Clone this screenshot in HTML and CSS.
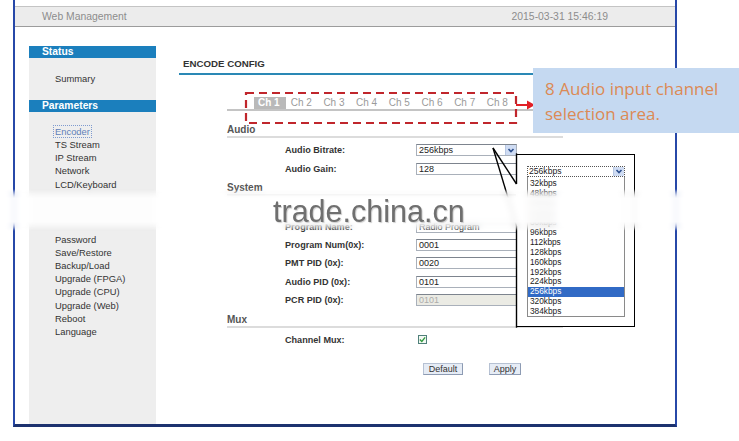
FILE: index.html
```html
<!DOCTYPE html>
<html>
<head>
<meta charset="utf-8">
<title>Web Management - Encode Config</title>
<link rel="stylesheet" href="styles.css">
</head>
<body>
<div class="page">
  <div class="frame">
    <div class="topgap"></div>
    <header class="topbar">
      <span>Web Management</span>
      <span>2015-03-31 15:46:19</span>
    </header>
    <div class="layout">
      <aside class="sidebar">
        <div class="side-head">Status</div>
        <ul class="side-list list-status"><li>Summary</li></ul>
        <div class="side-head">Parameters</div>
        <ul class="side-list list-params">
          <li><span class="focus">Encoder</span></li>
          <li>TS Stream</li>
          <li>IP Stream</li>
          <li>Network</li>
          <li>LCD/Keyboard</li>
        </ul>
        <ul class="side-list list-system">
          <li>Password</li>
          <li>Save/Restore</li>
          <li>Backup/Load</li>
          <li>Upgrade (FPGA)</li>
          <li>Upgrade (CPU)</li>
          <li>Upgrade (Web)</li>
          <li>Reboot</li>
          <li>Language</li>
        </ul>
      </aside>
      <main class="content">
        <h1 class="title">ENCODE CONFIG</h1>
        <div class="tabs">
          <span class="tab active">Ch 1</span>
          <span class="tab">Ch 2</span>
          <span class="tab">Ch 3</span>
          <span class="tab">Ch 4</span>
          <span class="tab">Ch 5</span>
          <span class="tab">Ch 6</span>
          <span class="tab">Ch 7</span>
          <span class="tab">Ch 8</span>
        </div>

        <h2 class="section section-first">Audio</h2>
        <div class="rows">
          <div class="row"><span class="label">Audio Bitrate:</span>
            <div class="field select"><span>256kbps</span><span class="arrow"><svg viewBox="0 0 10 9" width="10" height="9"><path d="M2.5 3 L5 5.6 L7.5 3" fill="none" stroke="#2c4f8e" stroke-width="1.6"/></svg></span></div>
          </div>
          <div class="row"><span class="label">Audio Gain:</span><div class="field">128</div></div>
        </div>

        <h2 class="section">System</h2>
        <div class="rows">
          <div class="row"></div>
          <div class="row"><span class="label">Program Name:</span><div class="field">Radio Program</div></div>
          <div class="row"><span class="label">Program Num(0x):</span><div class="field">0001</div></div>
          <div class="row"><span class="label">PMT PID (0x):</span><div class="field">0020</div></div>
          <div class="row"><span class="label">Audio PID (0x):</span><div class="field">0101</div></div>
          <div class="row"><span class="label">PCR PID (0x):</span><div class="field disabled">0101</div></div>
        </div>

        <h2 class="section">Mux</h2>
        <div class="rows">
          <div class="row"><span class="label">Channel Mux:</span>
            <span class="check"><svg viewBox="0 0 8 8" width="7" height="7"><path d="M1 4 L3.2 6.2 L7 1.5" fill="none" stroke="#2f9a3c" stroke-width="1.5"/></svg></span>
          </div>
        </div>

        <div class="buttons">
          <span class="btn btn-default">Default</span>
          <span class="btn btn-apply">Apply</span>
        </div>
      </main>
    </div>
  </div>

  <!-- annotation: red dashed selection box with arrow -->
  <svg class="red-box" width="294" height="36" viewBox="0 0 294 36">
    <rect x="2" y="2" width="270" height="30" fill="none" stroke="#c0262c" stroke-width="2.2" stroke-dasharray="8 5"/>
    <line x1="272" y1="14" x2="284" y2="14" stroke="#e11f26" stroke-width="2"/>
    <polygon points="283,9.5 291,14 283,18.5" fill="#e11f26"/>
  </svg>

  <div class="callout">8 Audio input channel<br>selection area.</div>

  <!-- annotation: expanded dropdown -->
  <div class="popup">
    <div class="pop-select"><span>256kbps</span><span class="arrow"><svg viewBox="0 0 10 9" width="10" height="9"><path d="M2.5 3 L5 5.6 L7.5 3" fill="none" stroke="#2c4f8e" stroke-width="1.6"/></svg></span></div>
    <ul class="pop-list">
      <li>32kbps</li>
      <li>48kbps</li>
      <li>56kbps</li>
      <li>64kbps</li>
      <li>80kbps</li>
      <li>96kbps</li>
      <li>112kbps</li>
      <li>128kbps</li>
      <li>160kbps</li>
      <li>192kbps</li>
      <li>224kbps</li>
      <li class="sel">256kbps</li>
      <li>320kbps</li>
      <li>384kbps</li>
    </ul>
  </div>
  <svg class="pointer" width="40" height="190" viewBox="0 0 40 190">
    <g stroke="#000" stroke-width="1.4" fill="none">
      <line x1="7" y1="4" x2="30.5" y2="40"/>
      <line x1="7" y1="4" x2="30.5" y2="82"/>
      <line x1="30.5" y1="9.3" x2="30.5" y2="40"/>
      <line x1="30.5" y1="82" x2="30.5" y2="183.7"/>
    </g>
  </svg>

  <div class="watermark"><span class="wm-text">trade.china.cn</span></div>
</div>
</body>
</html>
```

FILE: styles.css
```css
html, body {
  margin: 0;
  padding: 0;
  background: #ffffff;
}

body {
  font-family: "Liberation Sans", Arial, sans-serif;
  color: #333333;
}

.page {
  position: relative;
  width: 739px;
  height: 441px;
  overflow: hidden;
  background: #ffffff;
}

/* outer frame */
.frame {
  margin-left: 13px;
  width: 664px;
  height: 427px;
  box-sizing: border-box;
  border-left: 2px solid #2748a8;
  border-right: 2px solid #2748a8;
  border-bottom: 3px solid #1d326f;
  display: flex;
  flex-direction: column;
}

.topgap {
  height: 6px;
}

.topbar {
  height: 19px;
  border-top: 1px solid #c4c4c4;
  border-bottom: 1px solid #9c9c9c;
  background: #ececec;
  display: flex;
  justify-content: space-between;
  align-items: center;
  padding: 0 67px 0 27px;
  font-size: 10.4px;
  color: #8c8c8c;
}

.layout {
  display: flex;
  flex: 1;
  min-height: 0;
}

/* sidebar */
.sidebar {
  margin-left: 14px;
  margin-top: 19px;
  width: 127px;
  background: #eeeeee;
}

.side-head {
  height: 12px;
  line-height: 12px;
  background: #1b7fbd;
  color: #ffffff;
  font-weight: bold;
  font-size: 10.3px;
  padding-left: 13px;
}

.side-list {
  list-style: none;
  margin: 0;
  padding: 0 0 0 26px;
  font-size: 9.4px;
  line-height: 13.15px;
  color: #333333;
}

.list-status {
  padding-top: 14px;
  padding-bottom: 14.85px;
}

.list-params {
  padding-top: 13px;
}

.list-system {
  padding-top: 42px;
}

.focus {
  display: inline-block;
  line-height: 11px;
  margin-left: -2px;
  padding: 0 1px;
  border: 1px dotted #7f9bcf;
  color: #5f7fb8;
}

/* content */
.content {
  margin-left: 23px;
  flex: 1;
}

.title {
  margin: 31px 0 0;
  width: 350px;
  padding: 0 0 3px 4px;
  font-size: 9.7px;
  line-height: 12px;
  font-weight: bold;
  color: #333333;
  border-bottom: 2px solid #2a88b5;
}

.tabs {
  margin: 22px 0 0 48px;
  width: 306px;
  box-sizing: border-box;
  padding-left: 27px;
  display: flex;
  border-bottom: 2px solid #c4c4c4;
}

.tab {
  width: 32.7px;
  flex: none;
  box-sizing: border-box;
  height: 12px;
  line-height: 12px;
  padding-left: 4px;
  font-size: 10px;
  color: #9a9a9a;
  white-space: nowrap;
}

.tab.active {
  width: 32px;
  margin-right: 0.7px;
  background: #b9b9b9;
  color: #ffffff;
  font-weight: bold;
}

.section {
  margin: 4.3px 0 0 48px;
  width: 336px;
  font-size: 10px;
  line-height: 12px;
  font-weight: bold;
  color: #555555;
  border-bottom: 2px solid #dcdcdc;
}

.section.section-first {
  margin-top: 13px;
}

.rows {
  margin-top: 3px;
  margin-left: 106px;
}

.row {
  height: 18.4px;
  display: flex;
  align-items: center;
}

.label {
  width: 131px;
  flex: none;
  font-size: 9.1px;
  font-weight: bold;
  color: #333333;
}

.field {
  width: 102px;
  height: 12px;
  box-sizing: border-box;
  border: 1px solid #a9b0ba;
  border-top-color: #7d848e;
  background: #ffffff;
  font-size: 9px;
  line-height: 10px;
  padding-left: 2px;
  color: #222222;
  white-space: nowrap;
  overflow: hidden;
}

.field.select {
  width: 101px;
  display: flex;
  justify-content: space-between;
  padding-right: 0;
}

.arrow {
  width: 11px;
  height: 10px;
  box-sizing: border-box;
  background: #cfdcf3;
  border-left: 1px solid #b7c7e3;
  display: flex;
  align-items: center;
  justify-content: center;
}

.field.disabled {
  background: #ebebe4;
  color: #ababab;
}

.check {
  width: 9px;
  height: 9px;
  margin-left: 2px;
  box-sizing: border-box;
  border: 1px solid #50807a;
  background: #f3f8f3;
  display: flex;
  align-items: center;
  justify-content: center;
}

.buttons {
  margin: 13.6px 0 0 244px;
  display: flex;
  gap: 26px;
}

.btn {
  height: 12px;
  box-sizing: border-box;
  border: 1px solid #8d9bb3;
  border-top-color: #b6c1d3;
  border-left-color: #b6c1d3;
  background: #e6ecf5;
  font-size: 9px;
  line-height: 10px;
  text-align: center;
  color: #333333;
}

.btn-default {
  width: 40px;
}

.btn-apply {
  width: 32px;
}

/* annotations */
.red-box {
  position: absolute;
  left: 244px;
  top: 91px;
}

.callout {
  position: absolute;
  left: 533px;
  top: 68px;
  width: 206px;
  height: 65px;
  box-sizing: border-box;
  padding: 7.5px 0 0 12px;
  background: #c5d9f1;
  font-family: "Open Sans", "Liberation Sans", sans-serif;
  font-size: 17px;
  line-height: 25px;
  color: #dc8a55;
  white-space: nowrap;
}

.popup {
  position: absolute;
  left: 516px;
  top: 154px;
  width: 119px;
  height: 173px;
  box-sizing: border-box;
  border: 1.5px solid #000000;
  border-left: none;
  background: #ffffff;
  padding: 11px 0 0 11px;
}

.pop-select {
  width: 98px;
  height: 11px;
  box-sizing: border-box;
  border: 1px dotted #555555;
  display: flex;
  justify-content: space-between;
  font-size: 8.6px;
  line-height: 9px;
  padding-left: 1px;
  color: #222222;
}

.pop-select .arrow {
  height: 9px;
}

.pop-list {
  list-style: none;
  margin: 0;
  width: 98px;
  height: 140px;
  box-sizing: border-box;
  border: 1px solid #8a8a8a;
  border-top: none;
  padding: 2px 0 0;
  font-size: 8.3px;
  line-height: 9.85px;
  color: #222222;
}

.pop-list li {
  padding-left: 2px;
}

.pop-list li.sel {
  background: #316ac5;
  color: #ffffff;
}

.pointer {
  position: absolute;
  left: 486px;
  top: 144px;
}

.watermark {
  position: absolute;
  left: 0;
  top: 189px;
  width: 739px;
  height: 42px;
  box-sizing: border-box;
  padding-left: 273px;
  display: flex;
  align-items: center;
  background: rgba(255, 255, 255, 0.88);
  -webkit-backdrop-filter: blur(3px);
  backdrop-filter: blur(3px);
  -webkit-mask-image: linear-gradient(to bottom, transparent 0, #000 22%, #000 78%, transparent 100%);
  mask-image: linear-gradient(to bottom, transparent 0, #000 22%, #000 78%, transparent 100%);
}

.wm-text {
  font-family: "Liberation Sans", Arial, sans-serif;
  font-size: 30.5px;
  line-height: 24px;
  margin-top: 2px;
  color: #6f6f6f;
  text-shadow: 1px 1px 1px rgba(0, 0, 0, 0.2);
  white-space: nowrap;
}
```
